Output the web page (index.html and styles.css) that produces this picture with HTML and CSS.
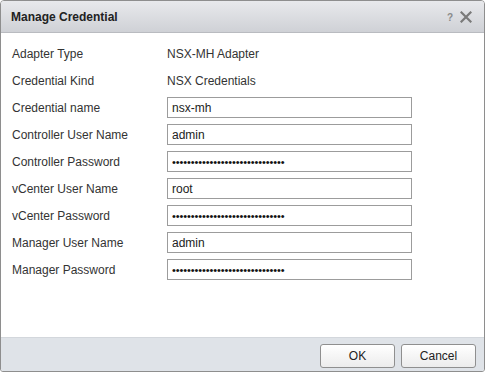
FILE: index.html
```html
<!DOCTYPE html>
<html lang="en">
<head>
  <meta charset="UTF-8">
  <title>Manage Credential</title>
  <link rel="stylesheet" href="styles.css">
</head>
<body>
  <div class="dialog">
    <div class="dialog-header">
      <span class="dialog-title">Manage Credential</span>
      <div class="dialog-tools">
        <span class="help-icon">?</span>
        <svg class="close-icon" width="12" height="12" viewBox="0 0 12 12">
          <path d="M1.5 1.5 L10.5 10.5 M10.5 1.5 L1.5 10.5" stroke="#7a7a7a" stroke-width="2.2" stroke-linecap="square"/>
        </svg>
      </div>
    </div>

    <div class="dialog-body">
      <form class="cred-form">
        <label class="field-label">Adapter Type</label>
        <span class="field-text">NSX-MH Adapter</span>

        <label class="field-label">Credential Kind</label>
        <span class="field-text">NSX Credentials</span>

        <label class="field-label" for="cred-name">Credential name</label>
        <input class="field-input" type="text" id="cred-name" value="nsx-mh">

        <label class="field-label" for="ctrl-user">Controller User Name</label>
        <input class="field-input" type="text" id="ctrl-user" value="admin">

        <label class="field-label" for="ctrl-pass">Controller Password</label>
        <input class="field-input" type="password" id="ctrl-pass" value="xxxxxxxxxxxxxxxxxxxxxxxxxxxxxx">

        <label class="field-label" for="vc-user">vCenter User Name</label>
        <input class="field-input" type="text" id="vc-user" value="root">

        <label class="field-label" for="vc-pass">vCenter Password</label>
        <input class="field-input" type="password" id="vc-pass" value="xxxxxxxxxxxxxxxxxxxxxxxxxxxxxx">

        <label class="field-label" for="mgr-user">Manager User Name</label>
        <input class="field-input" type="text" id="mgr-user" value="admin">

        <label class="field-label" for="mgr-pass">Manager Password</label>
        <input class="field-input" type="password" id="mgr-pass" value="xxxxxxxxxxxxxxxxxxxxxxxxxxxxxx">
      </form>
    </div>

    <div class="dialog-footer">
      <button class="btn" type="button">OK</button>
      <button class="btn" type="button">Cancel</button>
    </div>
  </div>
</body>
</html>
```

FILE: styles.css
```css
body {
  margin: 0;
  padding: 0;
  font-family: 'Liberation Sans', Arial, sans-serif;
  font-size: 12px;
  color: #333;
  background: #fff;
}

.dialog {
  width: 485px;
  height: 372px;
  box-sizing: border-box;
  border: 1px solid #8e8e8e;
  border-radius: 4px 4px 3px 3px;
  display: flex;
  flex-direction: column;
  overflow: hidden;
  background: #fff;
}

/* Header */
.dialog-header {
  height: 31px;
  flex: none;
  display: flex;
  align-items: center;
  justify-content: space-between;
  padding: 0 12px 0 10px;
  background: linear-gradient(#e8e9ec, #cfd1d6);
  border-bottom: 1px solid #b9bbc0;
}

.dialog-title {
  font-weight: bold;
  font-size: 12px;
  color: #222;
}

.dialog-tools {
  display: flex;
  align-items: center;
  gap: 7px;
  margin-top: 1px;
}

.help-icon {
  font-weight: bold;
  font-size: 10px;
  color: #8a8a8a;
}

.close-icon {
  display: block;
}

/* Body */
.dialog-body {
  flex: 1;
  padding: 10px 0 0 11px;
}

.cred-form {
  display: grid;
  grid-template-columns: 155px 245px;
  grid-auto-rows: 21px;
  row-gap: 6px;
  align-items: center;
}

.field-label,
.field-text {
  color: #333;
  font-size: 12px;
}

.field-input {
  box-sizing: border-box;
  width: 245px;
  height: 21px;
  margin: 0;
  padding: 0 4px;
  border: 1px solid #9c9c9c;
  border-radius: 0;
  font-family: 'Liberation Sans', Arial, sans-serif;
  font-size: 12px;
  color: #222;
  outline: none;
}

.field-input[type="password"] {
  font-size: 11px;
  letter-spacing: -0.1px;
  color: #111;
}

/* Footer */
.dialog-footer {
  height: 34px;
  flex: none;
  box-sizing: border-box;
  display: flex;
  justify-content: flex-end;
  gap: 6px;
  padding: 6px 8px 0 0;
  background: #dfe3e8;
  border-top: 1px solid #d3d7dc;
}

.btn {
  width: 75px;
  height: 24px;
  border: 1px solid #8f8f8f;
  border-radius: 3px;
  background: linear-gradient(#ffffff, #ececec);
  font-family: 'Liberation Sans', Arial, sans-serif;
  font-size: 12px;
  color: #222;
  cursor: pointer;
}
```
